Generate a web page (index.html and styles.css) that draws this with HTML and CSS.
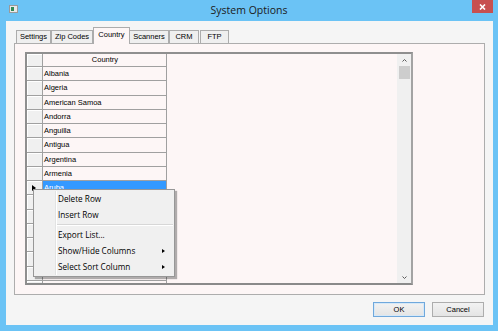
FILE: index.html
```html
<!DOCTYPE html>
<html lang="en">
<head>
    <meta charset="UTF-8">
    <title>System Options</title>
    <link rel="stylesheet" href="styles.css">
</head>
<body>
    <div class="window">
        <div class="titlebar">
            <div class="title-left">
                <svg class="app-icon" width="9" height="8" viewBox="0 0 9 8">
                    <rect x="0.5" y="0.5" width="8" height="7" fill="#e9e9e9" stroke="#9a9a9a"/>
                    <rect x="2" y="2" width="3" height="4" fill="#2f8a57"/>
                </svg>
            </div>
            <div class="title">System Options</div>
            <div class="title-right">
                <div class="close">
                    <svg width="7" height="6" viewBox="0 0 7 6">
                        <path d="M1 0.5 L6 5.5 M6 0.5 L1 5.5" stroke="#fff" stroke-width="1.6"/>
                    </svg>
                </div>
            </div>
        </div>

        <div class="client">
            <div class="tabs">
                <div class="tab">Settings</div>
                <div class="tab">Zip Codes</div>
                <div class="tab active">Country</div>
                <div class="tab">Scanners</div>
                <div class="tab">CRM</div>
                <div class="tab">FTP</div>
            </div>

            <div class="panel">
                <div class="grid">
                    <div class="rows">
                        <div class="row header"><div class="sel"></div><div class="cell">Country</div></div>
                        <div class="row"><div class="sel"></div><div class="cell">Albania</div></div>
                        <div class="row"><div class="sel"></div><div class="cell">Algeria</div></div>
                        <div class="row"><div class="sel"></div><div class="cell">American Samoa</div></div>
                        <div class="row"><div class="sel"></div><div class="cell">Andorra</div></div>
                        <div class="row"><div class="sel"></div><div class="cell">Anguilla</div></div>
                        <div class="row"><div class="sel"></div><div class="cell">Antigua</div></div>
                        <div class="row"><div class="sel"></div><div class="cell">Argentina</div></div>
                        <div class="row"><div class="sel"></div><div class="cell">Armenia</div></div>
                        <div class="row selected"><div class="sel"><span class="pointer"></span></div><div class="cell">Aruba</div></div>
                        <!-- rows hidden behind the context menu -->
                        <div class="row"><div class="sel"></div><div class="cell"></div></div>
                        <div class="row"><div class="sel"></div><div class="cell"></div></div>
                        <div class="row"><div class="sel"></div><div class="cell"></div></div>
                        <div class="row"><div class="sel"></div><div class="cell"></div></div>
                        <div class="row"><div class="sel"></div><div class="cell"></div></div>
                        <div class="row"><div class="sel"></div><div class="cell"></div></div>
                        <div class="row"><div class="sel"></div><div class="cell"></div></div>
                    </div>
                    <div class="scrollbar">
                        <div class="scroll-btn">
                            <svg width="5" height="3" viewBox="0 0 5 3"><path d="M0.5 2.5 L2.5 0.5 L4.5 2.5" fill="none" stroke="#5a5a5a"/></svg>
                        </div>
                        <div class="thumb"></div>
                        <div class="track"></div>
                        <div class="scroll-btn">
                            <svg width="5" height="3" viewBox="0 0 5 3"><path d="M0.5 0.5 L2.5 2.5 L4.5 0.5" fill="none" stroke="#5a5a5a"/></svg>
                        </div>
                    </div>
                </div>
            </div>

            <div class="buttons">
                <button class="btn default">OK</button>
                <button class="btn">Cancel</button>
            </div>
        </div>

        <!-- context menu opened on the selected row -->
        <div class="menu">
            <div class="menu-item">Delete Row</div>
            <div class="menu-item">Insert Row</div>
            <div class="menu-sep"></div>
            <div class="menu-item">Export List...</div>
            <div class="menu-item sub">Show/Hide Columns</div>
            <div class="menu-item sub">Select Sort Column</div>
        </div>
    </div>
</body>
</html>
```

FILE: styles.css
```css
* {
    box-sizing: border-box;
}
body {
    margin: 0;
    background-color: #6bc3f5;
    font-family: "Liberation Sans", Arial, sans-serif;
}
.window {
    position: relative;
    width: 498px;
    height: 331px;
    background-color: #6bc3f5;
    display: flex;
    flex-direction: column;
    overflow: hidden;
}

/* title bar */
.titlebar {
    height: 21px;
    display: grid;
    grid-template-columns: 1fr auto 1fr;
}
.title-left {
    display: flex;
    padding: 5px 0 0 9px;
}
.title {
    font-family: "Open Sans", sans-serif;
    font-size: 10.5px;
    line-height: 20px;
    color: #1b1b1b;
}
.title-right {
    display: flex;
    justify-content: flex-end;
    padding-right: 5px;
}
.close {
    width: 21px;
    height: 13px;
    background-color: #c75050;
    display: flex;
    align-items: center;
    justify-content: center;
}

/* client area */
.client {
    flex: 1;
    margin: 0 5px 6px 6px;
    background-color: #f5f5f5;
    padding: 7px 8px 8px 8px;
    display: flex;
    flex-direction: column;
}
.tabs {
    display: flex;
    align-items: flex-end;
    height: 15px;
    padding-left: 2px;
    position: relative;
    z-index: 1;
}
.tab {
    height: 13px;
    border: 1px solid #acacac;
    border-bottom: none;
    background-color: #efefef;
    font-size: 7.5px;
    line-height: 12px;
    text-align: center;
    color: #000;
}
.tab:nth-child(1) { width: 35px; }
.tab:nth-child(2) { width: 42px; }
.tab:nth-child(3) { width: 37px; }
.tab:nth-child(4) { width: 40px; }
.tab:nth-child(5) { width: 30px; }
.tab:nth-child(6) { width: 29px; margin-left: 1px; }
.tab.active {
    height: 17px;
    margin-bottom: -1px;
    margin-right: -1px;
    background-color: #fdf6f6;
    line-height: 14px;
    position: relative;
}
.panel {
    height: 252px;
    border: 1px solid #adadad;
    background-color: #fdf6f6;
    padding: 8px 71px 9px 10px;
}

/* data grid */
.grid {
    height: 100%;
    border: 2px solid #8f8f8f;
    border-right-color: #a3a3a3;
    border-bottom-color: #8a8a8a;
    background-color: #fdf6f6;
    display: flex;
    overflow: hidden;
}
.rows {
    flex: 1;
}
.row {
    display: flex;
    height: 14.25px;
    font-size: 7.5px;
    color: #000;
}
.row.header {
    height: 13px;
}
.sel {
    width: 16px;
    background-color: #f0f0f0;
    border-right: 1px solid #a0a0a0;
    border-bottom: 1px solid #a0a0a0;
    box-shadow: inset 1px 1px 0 #fff;
    display: flex;
    align-items: center;
    padding-left: 5px;
}
.cell {
    width: 124px;
    border-right: 1px solid #a0a0a0;
    border-bottom: 1px solid #a0a0a0;
    padding-left: 1px;
    line-height: 13px;
    white-space: nowrap;
}
.header .cell {
    text-align: center;
    line-height: 12px;
}
.selected .cell {
    background-color: #3399ff;
    color: #fff;
}
.pointer {
    width: 0;
    height: 0;
    border-top: 3px solid transparent;
    border-bottom: 3px solid transparent;
    border-left: 4px solid #000;
}
.scrollbar {
    width: 14px;
    background-color: #f0f0f0;
    display: flex;
    flex-direction: column;
}
.scroll-btn {
    height: 12px;
    display: flex;
    align-items: center;
    justify-content: center;
    padding-left: 1px;
}
.thumb {
    height: 13px;
    margin: 0 1px 0 2px;
    background-color: #cdcdcd;
}
.track {
    flex: 1;
}

/* dialog buttons */
.buttons {
    display: flex;
    justify-content: flex-end;
    gap: 7px;
    margin-top: 7px;
    padding-right: 1px;
}
.btn {
    width: 52px;
    height: 15px;
    padding: 0;
    border: 1px solid #adadad;
    background: linear-gradient(#f2f2f2, #e4e4e4);
    font-family: "Liberation Sans", Arial, sans-serif;
    font-size: 7.5px;
    color: #000;
}
.btn.default {
    border-color: #6fa8dc;
    box-shadow: inset 0 0 0 1px #d6e8f7;
}

/* context menu */
.menu {
    position: absolute;
    left: 33px;
    top: 189px;
    width: 142px;
    height: 88px;
    padding: 1px 1px;
    background-color: #f0f0f0;
    border: 1px solid #979797;
    box-shadow: 2px 2px 1px rgba(0, 0, 0, 0.3);
    font-family: "Open Sans", sans-serif;
    font-size: 8.2px;
    color: #000;
}
.menu::before {
    content: "";
    position: absolute;
    left: 21px;
    top: 1px;
    bottom: 1px;
    width: 1px;
    background-color: #e2e3e3;
    border-right: 1px solid #fff;
    box-sizing: content-box;
}
.menu-item {
    height: 16px;
    line-height: 16px;
    padding-left: 23px;
    position: relative;
}
.menu-item.sub::after {
    content: "";
    position: absolute;
    right: 8px;
    top: 6px;
    border-top: 2.5px solid transparent;
    border-bottom: 2.5px solid transparent;
    border-left: 3px solid #000;
}
.menu-sep {
    height: 2px;
    margin: 1px 0 1px 22px;
    border-top: 1px solid #d7d7d7;
    border-bottom: 1px solid #fff;
}
```
